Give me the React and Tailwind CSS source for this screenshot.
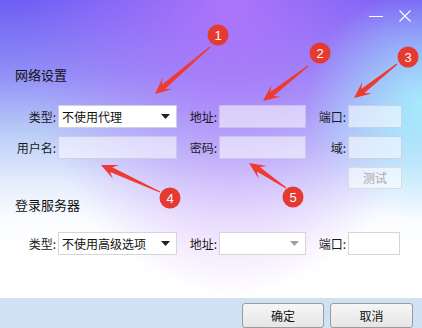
import React from 'react';

const font = { fontFamily: '"Microsoft YaHei", "Noto Sans CJK SC", "Noto Sans", sans-serif' };

// arrow polygon from tail to tip, widening toward the head
const arrowPoints = (x1, y1, x2, y2) => {
  const len = Math.hypot(x2 - x1, y2 - y1);
  const dx = (x2 - x1) / len;
  const dy = (y2 - y1) / len;
  const nx = -dy;
  const ny = dx;
  const H = 15;
  const W = 7.5;
  const w = 2.6;
  const neck = [x2 - dx * H * 0.75, y2 - dy * H * 0.75];
  const barb = [x2 - dx * H * 1.1, y2 - dy * H * 1.1];
  const pts = [
    [x1 + nx * 0.6, y1 + ny * 0.6],
    [neck[0] + nx * w, neck[1] + ny * w],
    [barb[0] + nx * W, barb[1] + ny * W],
    [x2, y2],
    [barb[0] - nx * W, barb[1] - ny * W],
    [neck[0] - nx * w, neck[1] - ny * w],
    [x1 - nx * 0.6, y1 - ny * 0.6],
  ];
  return pts.map((p) => p.map((v) => v.toFixed(1)).join(',')).join(' ');
};

const marks = [
  { n: 1, cx: 218, cy: 35, arrow: [210, 47, 155, 94] },
  { n: 2, cx: 320, cy: 53, arrow: [308, 66, 263, 101] },
  { n: 3, cx: 408, cy: 57, arrow: [397, 64, 354, 98] },
  { n: 4, cx: 170, cy: 198, arrow: [160, 192, 101, 165] },
  { n: 5, cx: 293, cy: 197, arrow: [286, 188, 249, 163] },
];

const Caret = ({ gray }) => (
  <svg width="9" height="5" viewBox="0 0 9 5">
    <path d="M0 0h9L4.5 5z" fill={gray ? '#a0a0a0' : '#222'} />
  </svg>
);

const Label = ({ children, w }) => (
  <span className={`${w} text-right text-[12px] text-[#1a1a1a] pr-[2px]`}>{children}</span>
);

const Glass = ({ w }) => (
  <div className={`${w} h-[23px] border border-[rgba(170,175,205,0.45)] bg-[rgba(255,255,255,0.55)]`} />
);

const Select = ({ w, text, gray, white }) => (
  <div
    className={`${w} h-[23px] flex items-center justify-between pl-[3px] pr-[6px] border ${
      white ? 'border-[#d6d6d6] bg-white' : 'border-[#cfd0dc] bg-white'
    }`}
  >
    <span className="text-[12px] text-[#111]">{text}</span>
    <Caret gray={gray} />
  </div>
);

export default function App() {
  return (
    <div
      className="relative w-[422px] h-[328px] overflow-hidden flex flex-col bg-[radial-gradient(circle_at_100%_32%,rgba(165,238,252,0.95)_0,rgba(165,238,252,0)_115px),radial-gradient(ellipse_at_55%_0%,rgba(176,118,250,0.95)_0,rgba(176,118,250,0)_210px),linear-gradient(180deg,#6e5ef4_0%,#8f8ef6_22%,#b9cbf8_40%,#e6eefd_56%,#f8fbff_66%,#ffffff_75%)]"
      style={font}
    >
      {/* title bar */}
      <div className="h-[32px] flex items-center justify-end gap-[16px] pr-[11px]">
        <div className="w-[14px] h-[1px] bg-white" />
        <svg width="12" height="12" viewBox="0 0 12 12">
          <path d="M0.5 0.5l11 11M11.5 0.5l-11 11" stroke="#fff" strokeWidth="1.1" />
        </svg>
      </div>

      <div className="flex-1 flex flex-col">
        <div className="mt-[35px] pl-[15px] h-[16px] leading-[16px] text-[13px] text-[#111]">网络设置</div>

        <div className="mt-[22px] flex items-center">
          <Label w="w-[58px]">类型:</Label>
          <Select w="w-[119px]" text="不使用代理" />
          <Label w="w-[42px]">地址:</Label>
          <Glass w="w-[87px]" />
          <Label w="w-[42px]">端口:</Label>
          <Glass w="w-[54px]" />
        </div>

        <div className="mt-[8px] flex items-center">
          <Label w="w-[58px]">用户名:</Label>
          <Glass w="w-[119px]" />
          <Label w="w-[42px]">密码:</Label>
          <Glass w="w-[87px]" />
          <Label w="w-[42px]">域:</Label>
          <Glass w="w-[54px]" />
        </div>

        <div className="mt-[8px] pl-[348px]">
          <div className="w-[54px] h-[22px] flex items-center justify-center border border-[#d9dbe0] rounded-[2px] bg-[rgba(255,255,255,0.6)] text-[12px] text-[#a8a8a8]">
            测试
          </div>
        </div>

        <div className="mt-[8px] pl-[15px] h-[16px] leading-[16px] text-[13px] text-[#111]">登录服务器</div>

        <div className="mt-[19px] flex items-center">
          <Label w="w-[58px]">类型:</Label>
          <Select w="w-[119px]" text="不使用高级选项" white />
          <Label w="w-[42px]">地址:</Label>
          <Select w="w-[87px]" text="" gray white />
          <Label w="w-[42px]">端口:</Label>
          <div className="w-[52px] h-[23px] border border-[#d6d6d6] bg-white" />
        </div>
      </div>

      {/* footer */}
      <div className="h-[30px] bg-[#cfe1f2] flex items-start justify-end gap-[6px] pr-[9px] pt-[5px]">
        <button className="w-[82px] h-[25px] border border-[#9c9c9c] rounded-[3px] bg-[linear-gradient(180deg,#f6f6f6,#e6e6e6)] text-[12px] text-[#111]">
          确定
        </button>
        <button className="w-[83px] h-[25px] border border-[#9c9c9c] rounded-[3px] bg-[linear-gradient(180deg,#f6f6f6,#e6e6e6)] text-[12px] text-[#111]">
          取消
        </button>
      </div>

      {/* annotation overlay */}
      <svg className="absolute inset-0 pointer-events-none" width="422" height="328" viewBox="0 0 422 328">
        {marks.map((m) => (
          <polygon key={`a${m.n}`} points={arrowPoints(...m.arrow)} fill="#ee3b32" />
        ))}
        {marks.map((m) => (
          <g key={`c${m.n}`}>
            <circle cx={m.cx} cy={m.cy} r="10.5" fill="#e63a30" />
            <text
              x={m.cx}
              y={m.cy + 4.5}
              textAnchor="middle"
              fontSize="13"
              fill="#fff"
              style={{ fontFamily: '"Liberation Sans", Arial, sans-serif' }}
            >
              {m.n}
            </text>
          </g>
        ))}
      </svg>
    </div>
  );
}
